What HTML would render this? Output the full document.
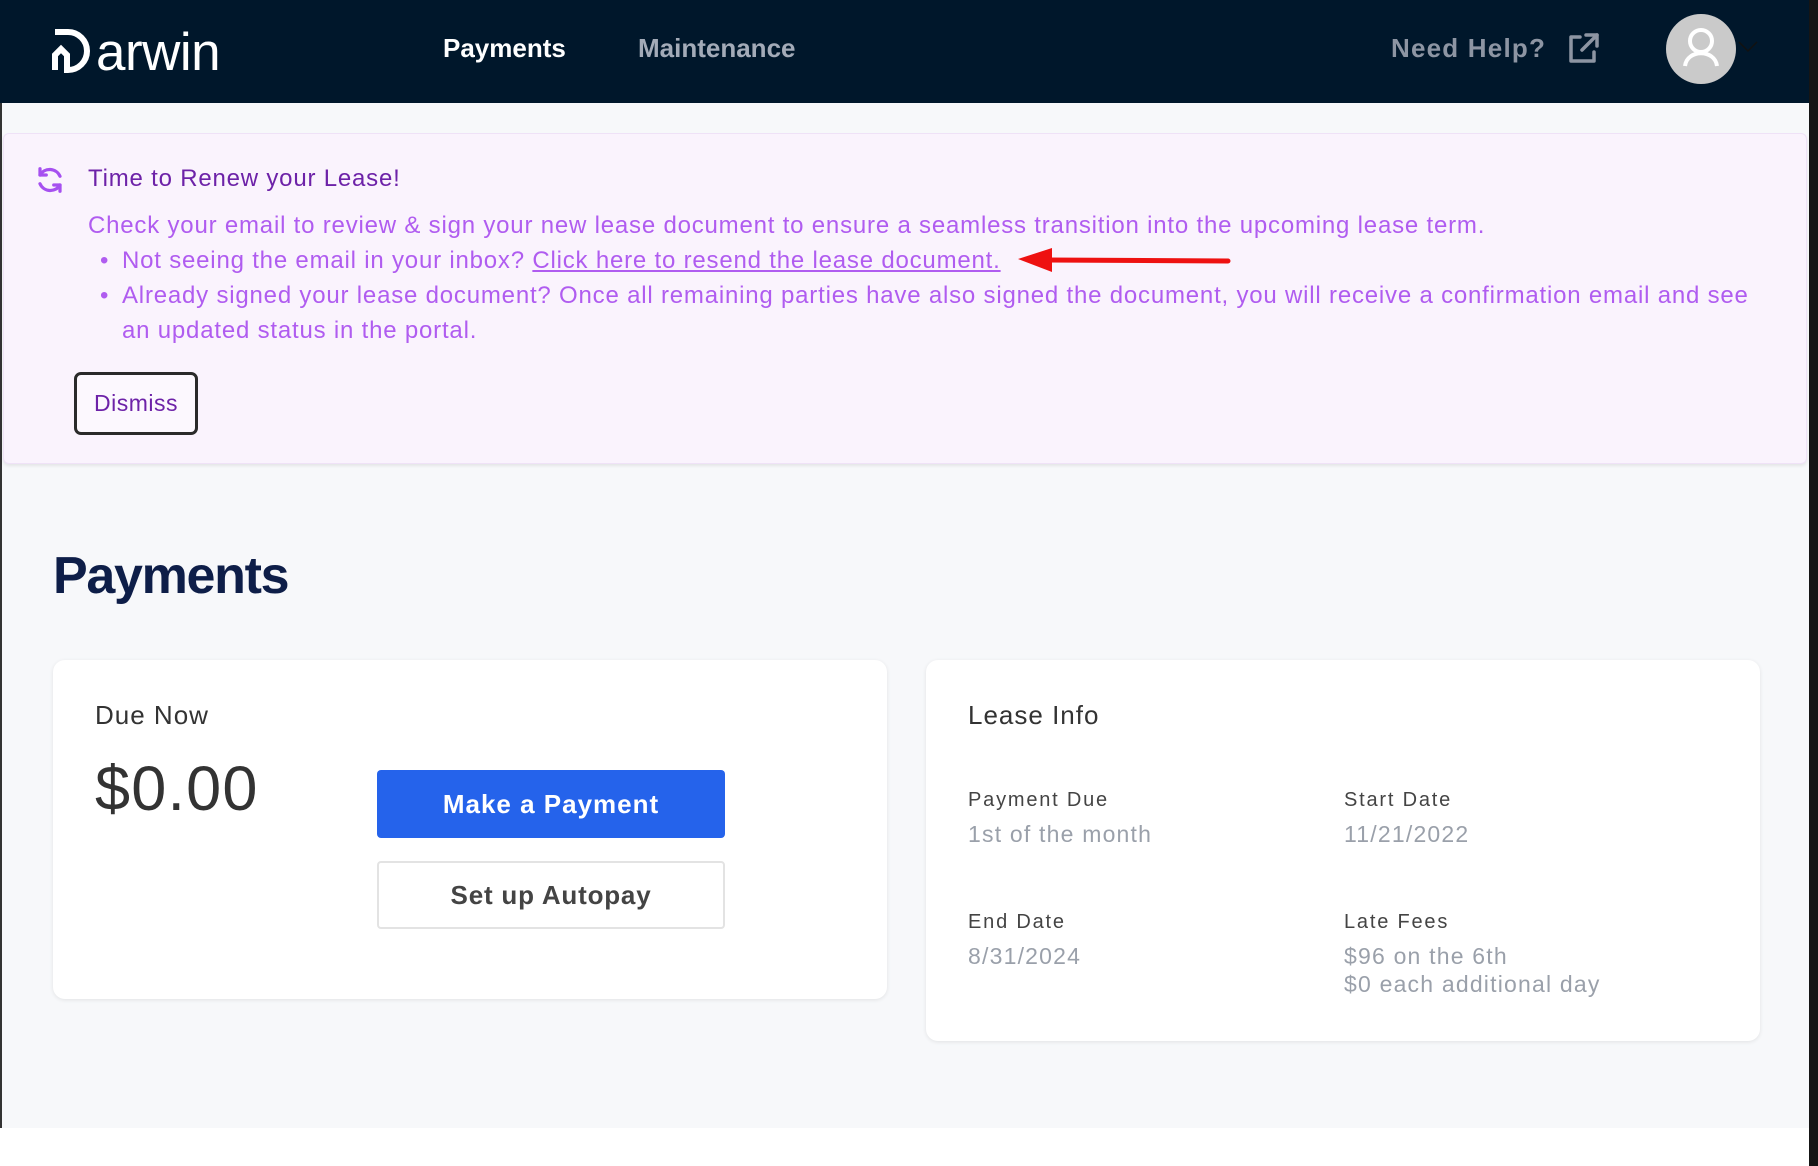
<!DOCTYPE html>
<html><head><meta charset="utf-8"><style>
*{box-sizing:border-box;margin:0;padding:0}
body{width:1818px;height:1166px;background:#fff;font-family:"Liberation Sans",sans-serif;position:relative;overflow:hidden}
.abs{position:absolute}
#page{position:absolute;left:0;top:0;width:1809px;height:1128px;background:#f7f8fa;border-left:2px solid #333}
#strip{position:absolute;left:1809px;top:0;width:9px;height:1166px;background:#151515}
#nav{position:absolute;left:0;top:0;width:1809px;height:103px;background:#00172b}
.navt{position:absolute;font-size:26px;font-weight:bold;top:33px}
#banner{position:absolute;left:3px;top:133px;width:1804px;height:331px;background:#faf3fd;border:1px solid #efe2f7;border-radius:6px;box-shadow:0 2px 3px rgba(0,0,0,.08)}
.bt{position:absolute;font-size:24px;letter-spacing:0.8px;color:#b05cf0;white-space:nowrap}
.card{position:absolute;background:#fff;border-radius:12px;box-shadow:0 1px 4px rgba(0,0,0,.09)}
.lab{position:absolute;font-size:20px;color:#444;letter-spacing:1.8px}
.val{position:absolute;font-size:23px;color:#9aa0aa;line-height:28px;letter-spacing:1.2px}
</style></head><body>
<div id="page"></div>
<div id="strip"></div>
<div id="nav">
  <svg class="abs" style="left:52px;top:29px" width="42" height="44" viewBox="0 0 42 44">
    <path d="M3 3 H16 A19 19 0 0 1 16 41 H12" fill="none" stroke="#fff" stroke-width="6"/>
    <path d="M3 41 V26 L9 20 L15 26 V41" fill="none" stroke="#fff" stroke-width="6" stroke-linejoin="miter"/>
  </svg>
  <div class="abs" style="left:96px;top:22px;font-size:53px;color:#fff;letter-spacing:-0.5px">arwin</div>
  <div class="navt" style="left:443px;color:#fff">Payments</div>
  <div class="navt" style="left:638px;color:#a3abb8">Maintenance</div>
  <div class="navt" style="left:1391px;color:#8d95a3;letter-spacing:1.2px">Need Help?</div>
  <svg class="abs" style="left:1566px;top:32px" width="34" height="34" viewBox="0 0 34 34" fill="none" stroke="#8d95a3" stroke-width="3.5" stroke-linecap="round" stroke-linejoin="round">
    <path d="M14 5 H5 V29 H28 V20"/><path d="M20 3 H31 V14"/><path d="M31 3 L16 18"/>
  </svg>
  <div class="abs" style="left:1666px;top:14px;width:70px;height:70px;border-radius:50%;background:#cacaca"></div>
  <svg class="abs" style="left:1666px;top:14px" width="70" height="70" viewBox="0 0 70 70" fill="none" stroke="#fff" stroke-width="4">
    <circle cx="35" cy="27" r="11"/><path d="M19 52 C21 35 49 35 51 52"/>
  </svg>
  <svg class="abs" style="left:1737px;top:40px" width="22" height="14" viewBox="0 0 22 14"><path d="M2 2 L11 11 L20 2" fill="none" stroke="#111" stroke-width="1.5"/></svg>
</div>
<div id="banner">
  <svg class="abs" style="left:31px;top:31px" width="30" height="30" viewBox="0 0 24 24" fill="none" stroke="#a650f0" stroke-width="2.6" stroke-linecap="round" stroke-linejoin="round">
    <path d="M4 8 A9 9 0 0 1 20 9"/><path d="M4 3 V8 H9"/><path d="M20 16 A9 9 0 0 1 4 15"/><path d="M20 21 V16 H15"/>
  </svg>
  <div class="bt" style="left:84px;top:31px;color:#6d22a8">Time to Renew your Lease!</div>
  <div class="bt" style="left:84px;top:78px">Check your email to review &amp; sign your new lease document to ensure a seamless transition into the upcoming lease term.</div>
  <div class="bt" style="left:96px;top:113px">•</div>
  <div class="bt" style="left:118px;top:113px">Not seeing the email in your inbox? <span style="text-decoration:underline">Click here to resend the lease document.</span></div>
  <div class="bt" style="left:96px;top:148px">•</div>
  <div class="bt" style="left:118px;top:148px">Already signed your lease document? Once all remaining parties have also signed the document, you will receive a confirmation email and see</div>
  <div class="bt" style="left:118px;top:183px">an updated status in the portal.</div>
  <div class="abs" style="left:70px;top:238px;width:124px;height:63px;border:3px solid #2a2a2a;border-radius:7px;background:#fcf8fe;font-size:23px;letter-spacing:0.5px;color:#6d22a8;text-align:center;line-height:57px">Dismiss</div>
</div>
<svg class="abs" style="left:1010px;top:245px" width="230" height="30"><path d="M36 15 L218 16" stroke="#ee1111" stroke-width="5" stroke-linecap="round"/><path d="M8 14 L42 3 L42 27 Z" fill="#ee1111"/></svg>
<div class="abs" style="left:53px;top:546px;font-size:52px;font-weight:bold;color:#0e1e48;letter-spacing:-1.3px">Payments</div>
<div class="card" style="left:53px;top:660px;width:834px;height:339px">
  <div class="abs" style="left:42px;top:40px;font-size:26px;color:#333;letter-spacing:1px">Due Now</div>
  <div class="abs" style="left:42px;top:93px;font-size:63px;color:#333;letter-spacing:1.2px">$0.00</div>
  <div class="abs" style="left:324px;top:110px;width:348px;height:68px;background:#2563eb;border-radius:4px;color:#fff;font-size:26px;font-weight:bold;letter-spacing:1px;text-align:center;line-height:68px">Make a Payment</div>
  <div class="abs" style="left:324px;top:201px;width:348px;height:68px;border:2px solid #e3e3e3;border-radius:4px;color:#444;font-size:26px;font-weight:bold;letter-spacing:0.8px;text-align:center;line-height:64px">Set up Autopay</div>
</div>
<div class="card" style="left:926px;top:660px;width:834px;height:381px">
  <div class="abs" style="left:42px;top:40px;font-size:26px;color:#333;letter-spacing:1px">Lease Info</div>
  <div class="lab" style="left:42px;top:129px">Payment Due</div>
  <div class="val" style="left:42px;top:160px">1st of the month</div>
  <div class="lab" style="left:418px;top:129px">Start Date</div>
  <div class="val" style="left:418px;top:160px">11/21/2022</div>
  <div class="lab" style="left:42px;top:251px">End Date</div>
  <div class="val" style="left:42px;top:282px">8/31/2024</div>
  <div class="lab" style="left:418px;top:251px">Late Fees</div>
  <div class="val" style="left:418px;top:282px">$96 on the 6th<br>$0 each additional day</div>
</div>
</body></html>
